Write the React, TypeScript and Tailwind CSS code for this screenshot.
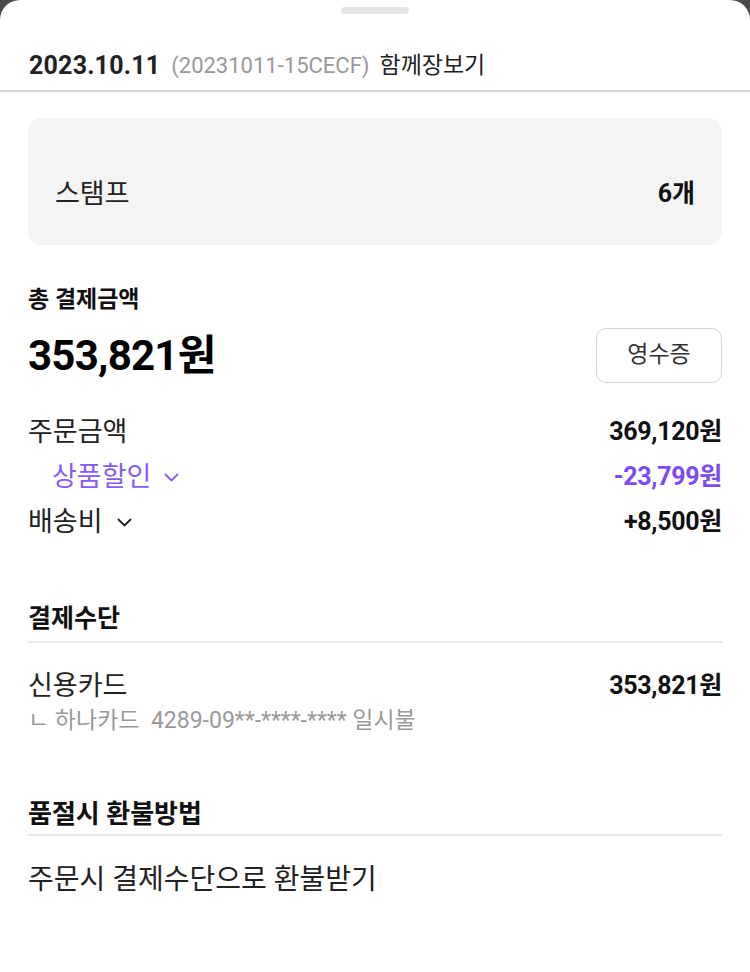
import React from 'react';

const font = { fontFamily: "Roboto, 'Noto Sans CJK KR', sans-serif" };

const Chevron: React.FC<{ className?: string }> = ({ className }) => (
  <svg width="15" height="9" viewBox="0 0 15 9" fill="none" className={className}>
    <path d="M1.5 1.5l6 6 6-6" stroke="currentColor" strokeWidth="1.8" strokeLinecap="round" strokeLinejoin="round" />
  </svg>
);

const Row: React.FC<{ label: React.ReactNode; value: string; valueClass?: string }> = ({
  label,
  value,
  valueClass = 'text-[#111]',
}) => (
  <div className="flex h-[34px] items-center justify-between">
    {label}
    <span className={`text-[25px] leading-[34px] font-bold tracking-[-0.3px] ${valueClass}`}>{value}</span>
  </div>
);

export default function App() {
  return (
    <div className="min-h-[972px] w-[750px] bg-[#4a4a4a]" style={font}>
      <div className="min-h-[972px] rounded-t-[20px] bg-white">
        {/* Drag handle */}
        <div className="flex justify-center pt-[7px]">
          <div className="h-[7px] w-[68px] rounded-full bg-[#e4e4e4]" />
        </div>

        {/* Header */}
        <div className="flex h-[78px] items-center border-b-2 border-[#d5d9dc] px-[29px] pt-[27px]">
          <span className="text-[25px] leading-[32px] font-bold tracking-[0.2px] text-[#222]">2023.10.11</span>
          <span className="ml-[11px] text-[22px] leading-[32px] text-[#999]">(20231011-15CECF)</span>
          <span className="ml-[10px] text-[23px] leading-[32px] text-[#222]">함께장보기</span>
        </div>

        <div className="px-[28px]">
          {/* Stamp box */}
          <div className="mt-[26px] flex h-[127px] items-center justify-between rounded-[14px] bg-[#f4f4f4] pl-[27px] pr-[27px] pt-[24px]">
            <span className="text-[27px] leading-[34px] text-[#222]">스탬프</span>
            <span className="text-[25px] leading-[34px] font-bold text-[#111]">6개</span>
          </div>

          {/* Total */}
          <div className="mt-[40px] text-[23px] leading-[30px] font-bold text-[#111]">총 결제금액</div>
          <div className="mt-[13px] flex h-[55px] items-center justify-between">
            <span className="text-[42px] leading-[50px] font-bold tracking-[-0.75px] text-black">353,821원</span>
            <button className="h-[55px] w-[126px] rounded-[10px] border border-[#d4d4d4] text-[23px] text-[#333]">
              영수증
            </button>
          </div>

          {/* Breakdown */}
          <div className="mt-[32px] flex flex-col gap-[11px]">
            <Row label={<span className="text-[27px] leading-[34px] text-[#222]">주문금액</span>} value="369,120원" />
            <Row
              label={
                <span className="flex items-center gap-[13px] pl-[24px] text-[27px] leading-[34px] text-[#8a5cf5]">
                  상품할인 <Chevron />
                </span>
              }
              value="-23,799원"
              valueClass="text-[#7b4cf5]"
            />
            <Row
              label={
                <span className="flex items-center gap-[14px] text-[27px] leading-[34px] text-[#222]">
                  배송비 <Chevron />
                </span>
              }
              value="+8,500원"
            />
          </div>

          {/* Payment method */}
          <div className="mt-[64px] border-b-2 border-[#e8e8e8] pb-[6px] text-[25px] leading-[32px] font-bold text-[#111]">
            결제수단
          </div>
          <div className="mt-[26px]">
            <Row label={<span className="text-[27px] leading-[34px] text-[#222]">신용카드</span>} value="353,821원" />
            <div className="mt-[3px] text-[23px] leading-[30px] text-[#999]">
              ㄴ 하나카드&nbsp;&nbsp;4289-09**-****-**** 일시불
            </div>
          </div>

          {/* Refund */}
          <div className="mt-[62px] border-b-2 border-[#e8e8e8] pb-[4px] text-[26px] leading-[32px] font-bold text-[#111]">
            품절시 환불방법
          </div>
          <div className="mt-[26px] text-[28px] leading-[36px] text-[#222]">주문시 결제수단으로 환불받기</div>
        </div>
      </div>
    </div>
  );
}
